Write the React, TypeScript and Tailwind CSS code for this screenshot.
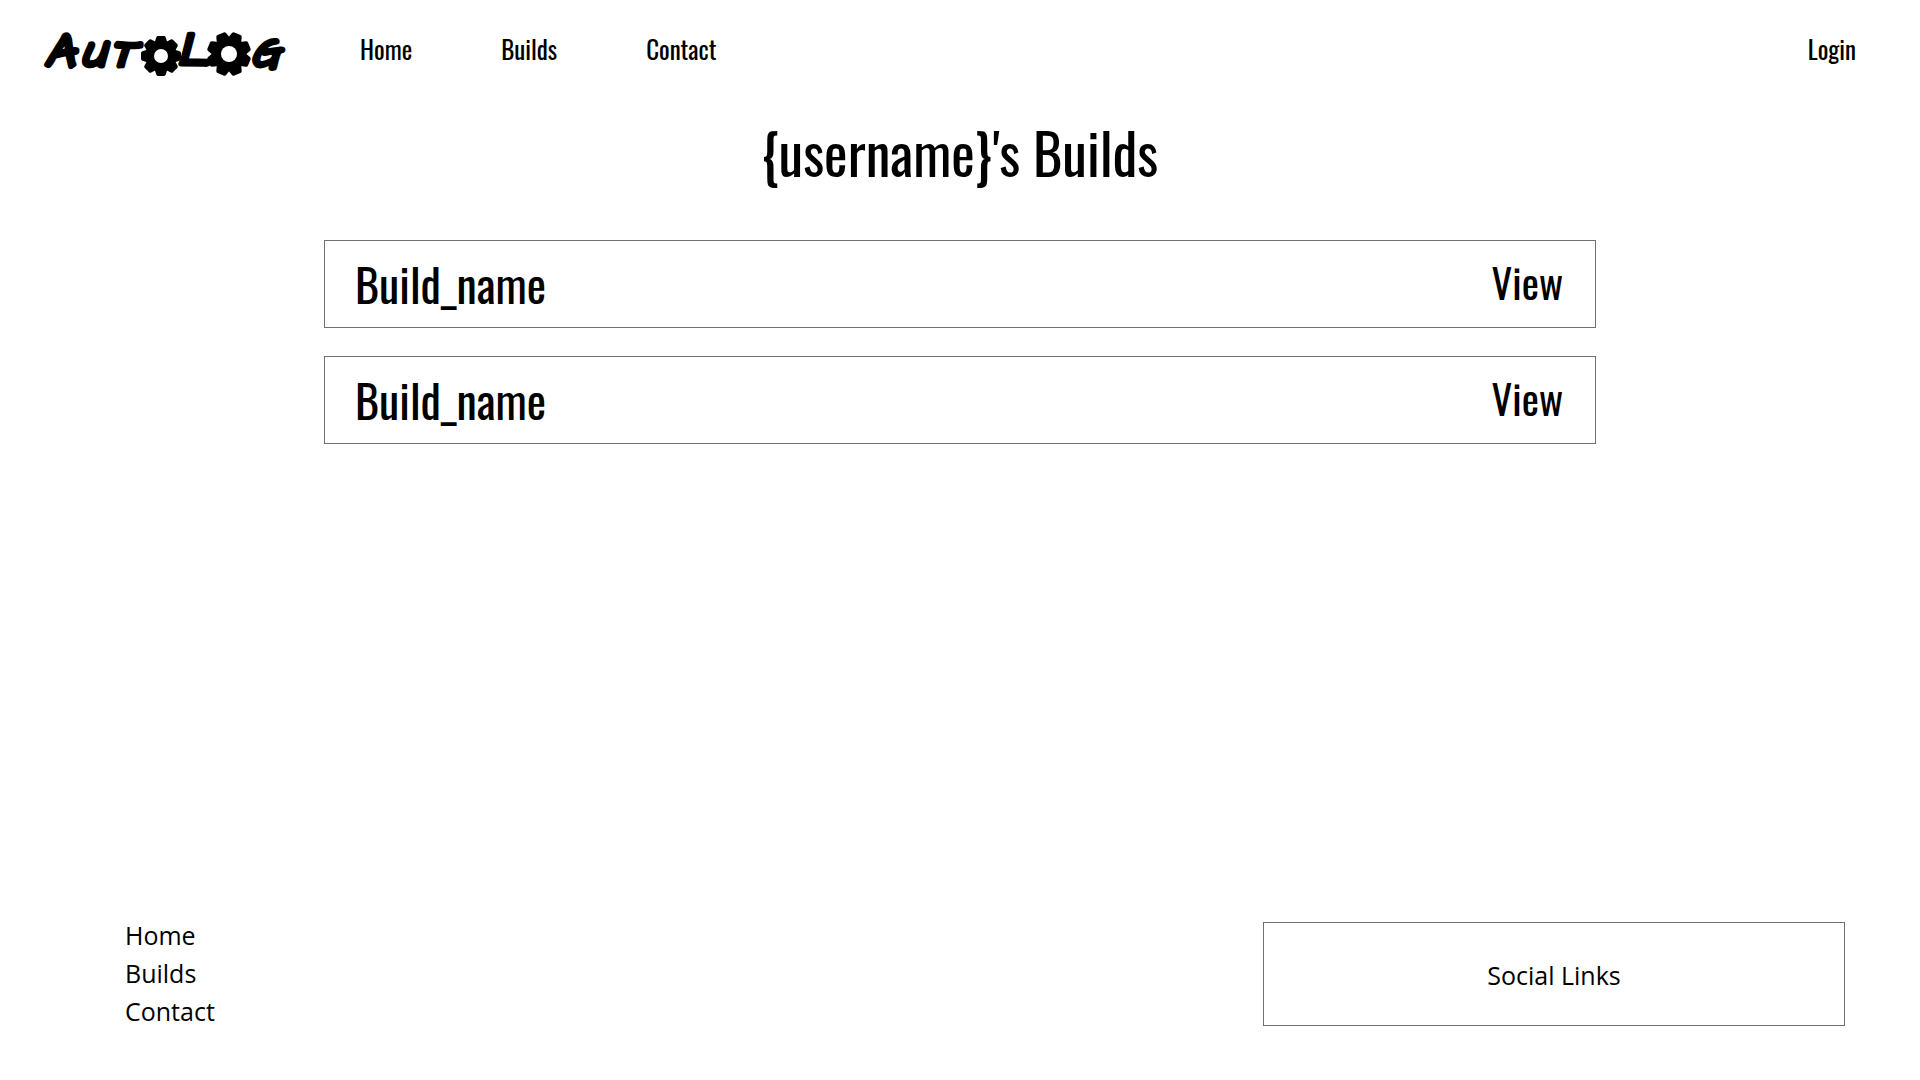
const display = "font-['Oswald','Liberation_Sans_Narrow',sans-serif]";
const body = "font-['Segoe_UI','Open_Sans',sans-serif]";

const TEETH = [0, 45, 90, 135, 180, 225, 270, 315];

function Gear({ cx, cy, r, hole, turn }: { cx: number; cy: number; r: number; hole: number; turn: number }) {
  return (
    <g transform={`translate(${cx} ${cy})`}>
      <circle r={r * 0.77} />
      {TEETH.map((angle) => (
        <path
          key={angle}
          transform={`rotate(${angle + turn}) scale(${r / 20})`}
          d="M-6.5-13 L-4.8-18.6 Q-4.3-20-3-20 H3 Q4.3-20 4.8-18.6 L6.5-13Z"
        />
      ))}
      <circle r={hole} fill="#fff" />
    </g>
  );
}

function Logo() {
  return (
    <svg
      viewBox="0 0 246 60"
      className="h-[60px] w-[246px] overflow-visible font-['Permanent_Marker','Architects_Daughter',sans-serif] italic"
      role="img"
      aria-label="AutoLog"
    >
      <g stroke="#000" strokeWidth="5" strokeLinejoin="round" strokeLinecap="round" fontSize="40">
        <text x="1" y="42" fontSize="46">A</text>
        <text x="38" y="42">U</text>
        <text x="67" y="42">T</text>
        <text x="134" y="41" fontSize="46">L</text>
        <text x="208" y="42">G</text>
      </g>
      <Gear cx={117} cy={32} r={20} hole={7} turn={0} />
      <Gear cx={185} cy={30} r={22} hole={8} turn={22.5} />
    </svg>
  );
}

function BuildCard({ name }: { name: string }) {
  return (
    <li className={`${display} flex h-[88px] items-center justify-between border border-[#707070] pr-8 pb-1.5 pl-[30px]`}>
      <h2 className="pt-1 text-[46px] leading-none">{name}</h2>
      <a href="#view" className="text-[41px] leading-none">View</a>
    </li>
  );
}

const links = ["Home", "Builds", "Contact"];

export default function App() {
  return (
    <div className="flex min-h-screen flex-col bg-white text-black">
      <header className={`${display} flex items-start pt-6 pr-16 pl-11 text-[25px] leading-[50px]`}>
        <Logo />
        <nav className="ml-[70px] flex grow items-center gap-[89px]">
          {links.map((l) => (
            <a key={l} href={`#${l.toLowerCase()}`}>{l}</a>
          ))}
          <a href="#login" className="ml-auto">Login</a>
        </nav>
      </header>
      <main className="mx-auto w-full max-w-[1272px]">
        <h1 className={`${display} mt-7 text-center text-[56px] leading-[80px]`}>{"{username}'s Builds"}</h1>
        <ul className="mt-12 flex flex-col gap-7">
          <BuildCard name="Build_name" />
          <BuildCard name="Build_name" />
        </ul>
      </main>
      <footer className={`${body} mt-auto flex items-start justify-between pr-[75px] pb-[50px] pl-[125px] text-[25px]`}>
        <nav className="flex flex-col leading-[38px]">
          {links.map((l) => (
            <a key={l} href={`#${l.toLowerCase()}`}>{l}</a>
          ))}
        </nav>
        <section className="mt-1.5 flex h-[104px] w-[582px] items-center justify-center border border-[#707070] pt-1">
          Social Links
        </section>
      </footer>
    </div>
  );
}
